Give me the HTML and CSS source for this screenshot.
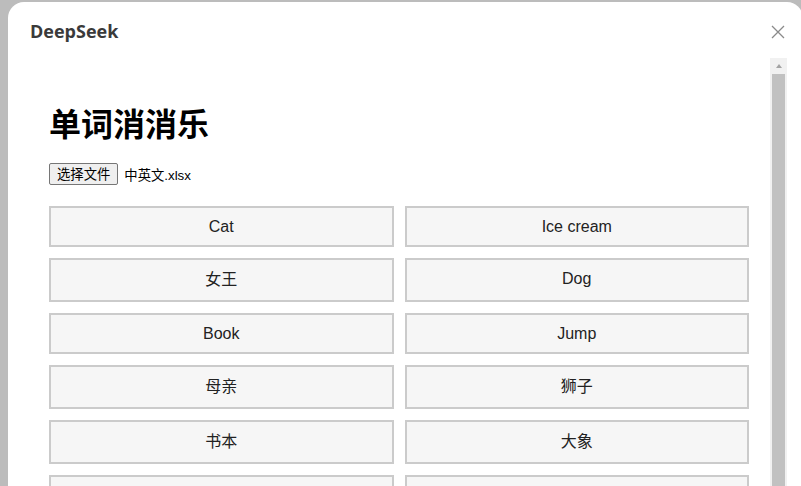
FILE: index.html
```html
<!DOCTYPE html>
<html lang="zh-CN">
<head>
<meta charset="utf-8">
<title>DeepSeek</title>
<link rel="stylesheet" href="styles.css">
</head>
<body>
<div class="dialog">
  <header class="dialog-head">
    <span class="brand">DeepSeek</span>
    <svg class="close" width="14" height="14" viewBox="0 0 14 14" aria-label="关闭">
      <path d="M1 1 L13 13 M13 1 L1 13" stroke="#8a8a8a" stroke-width="1.3" fill="none"/>
    </svg>
  </header>
  <div class="dialog-body">
    <main class="preview">
      <h1 class="title">单词消消乐</h1>
      <div class="file-row">
        <span class="file-btn">选择文件</span>
        <span class="file-name">中英文.xlsx</span>
      </div>
      <div class="word-grid">
        <div class="card">Cat</div>
        <div class="card">Ice cream</div>
        <div class="card zh">女王</div>
        <div class="card">Dog</div>
        <div class="card">Book</div>
        <div class="card">Jump</div>
        <div class="card zh">母亲</div>
        <div class="card zh">狮子</div>
        <div class="card zh">书本</div>
        <div class="card zh">大象</div>
        <div class="card blank"></div>
        <div class="card blank"></div>
      </div>
    </main>
    <div class="scrollbar">
      <div class="scroll-up"><span class="arrow"></span></div>
      <div class="scroll-thumb"></div>
    </div>
  </div>
</div>
</body>
</html>
```

FILE: styles.css
```css
html, body {
  margin: 0;
  height: 100%;
  overflow: hidden;
}

body {
  background: #bcbcbc;
  font-family: "Liberation Sans", "Noto Sans CJK SC", sans-serif;
}

.dialog {
  margin: 2px 0 0 8px;
  width: 795px;
  height: calc(100vh - 2px);
  background: #fff;
  border-radius: 16px 16px 0 0;
  display: flex;
  flex-direction: column;
}

.dialog-head {
  height: 56px;
  flex: none;
  display: flex;
  align-items: center;
  justify-content: space-between;
  padding: 0 18px 0 22px;
}

.brand {
  font-family: "Open Sans", "Noto Sans", sans-serif;
  font-weight: 700;
  font-size: 18px;
  color: #3a3a3a;
  margin-top: 2px;
}

.close {
  display: block;
  margin-top: 4px;
}

.dialog-body {
  flex: 1;
  min-height: 0;
  display: flex;
  overflow: hidden;
  padding-right: 16px;
}

.preview {
  flex: 1;
  padding: 44px 21px 0 41px;
  color: #000;
}

.title {
  margin: 0;
  font-family: "Noto Sans CJK SC", sans-serif;
  font-weight: 700;
  font-size: 32px;
  line-height: 40px;
}

.file-row {
  margin-top: 21px;
  display: flex;
  align-items: center;
  gap: 6px;
  font-size: 13.33px;
}

.file-btn {
  font-family: "Noto Sans CJK SC", sans-serif;
  background: #efefef;
  border: 1px solid #767676;
  border-radius: 2px;
  padding: 0 7px;
  line-height: 20px;
  color: #000;
}

.file-name {
  color: #000;
}

.word-grid {
  margin-top: 21px;
  display: grid;
  grid-template-columns: 1fr 1fr;
  gap: 11px 11px;
}

.card {
  background: #f6f6f6;
  border: 2px solid #cbcbcb;
  padding: 10px;
  text-align: center;
  font-size: 16px;
  line-height: 17px;
  color: #222;
}

.card.zh {
  line-height: 20px;
}

.card.blank {
  min-height: 17px;
}

.scrollbar {
  width: 17px;
  flex: none;
  background: #f1f1f1;
  display: flex;
  flex-direction: column;
}

.scroll-up {
  height: 16px;
  display: flex;
  align-items: center;
  justify-content: center;
}

.arrow {
  width: 0;
  height: 0;
  border-left: 3.5px solid transparent;
  border-right: 3.5px solid transparent;
  border-bottom: 4px solid #a3a3a3;
}

.scroll-thumb {
  flex: 1;
  margin: 0 2px;
  background: #c1c1c1;
}
```
